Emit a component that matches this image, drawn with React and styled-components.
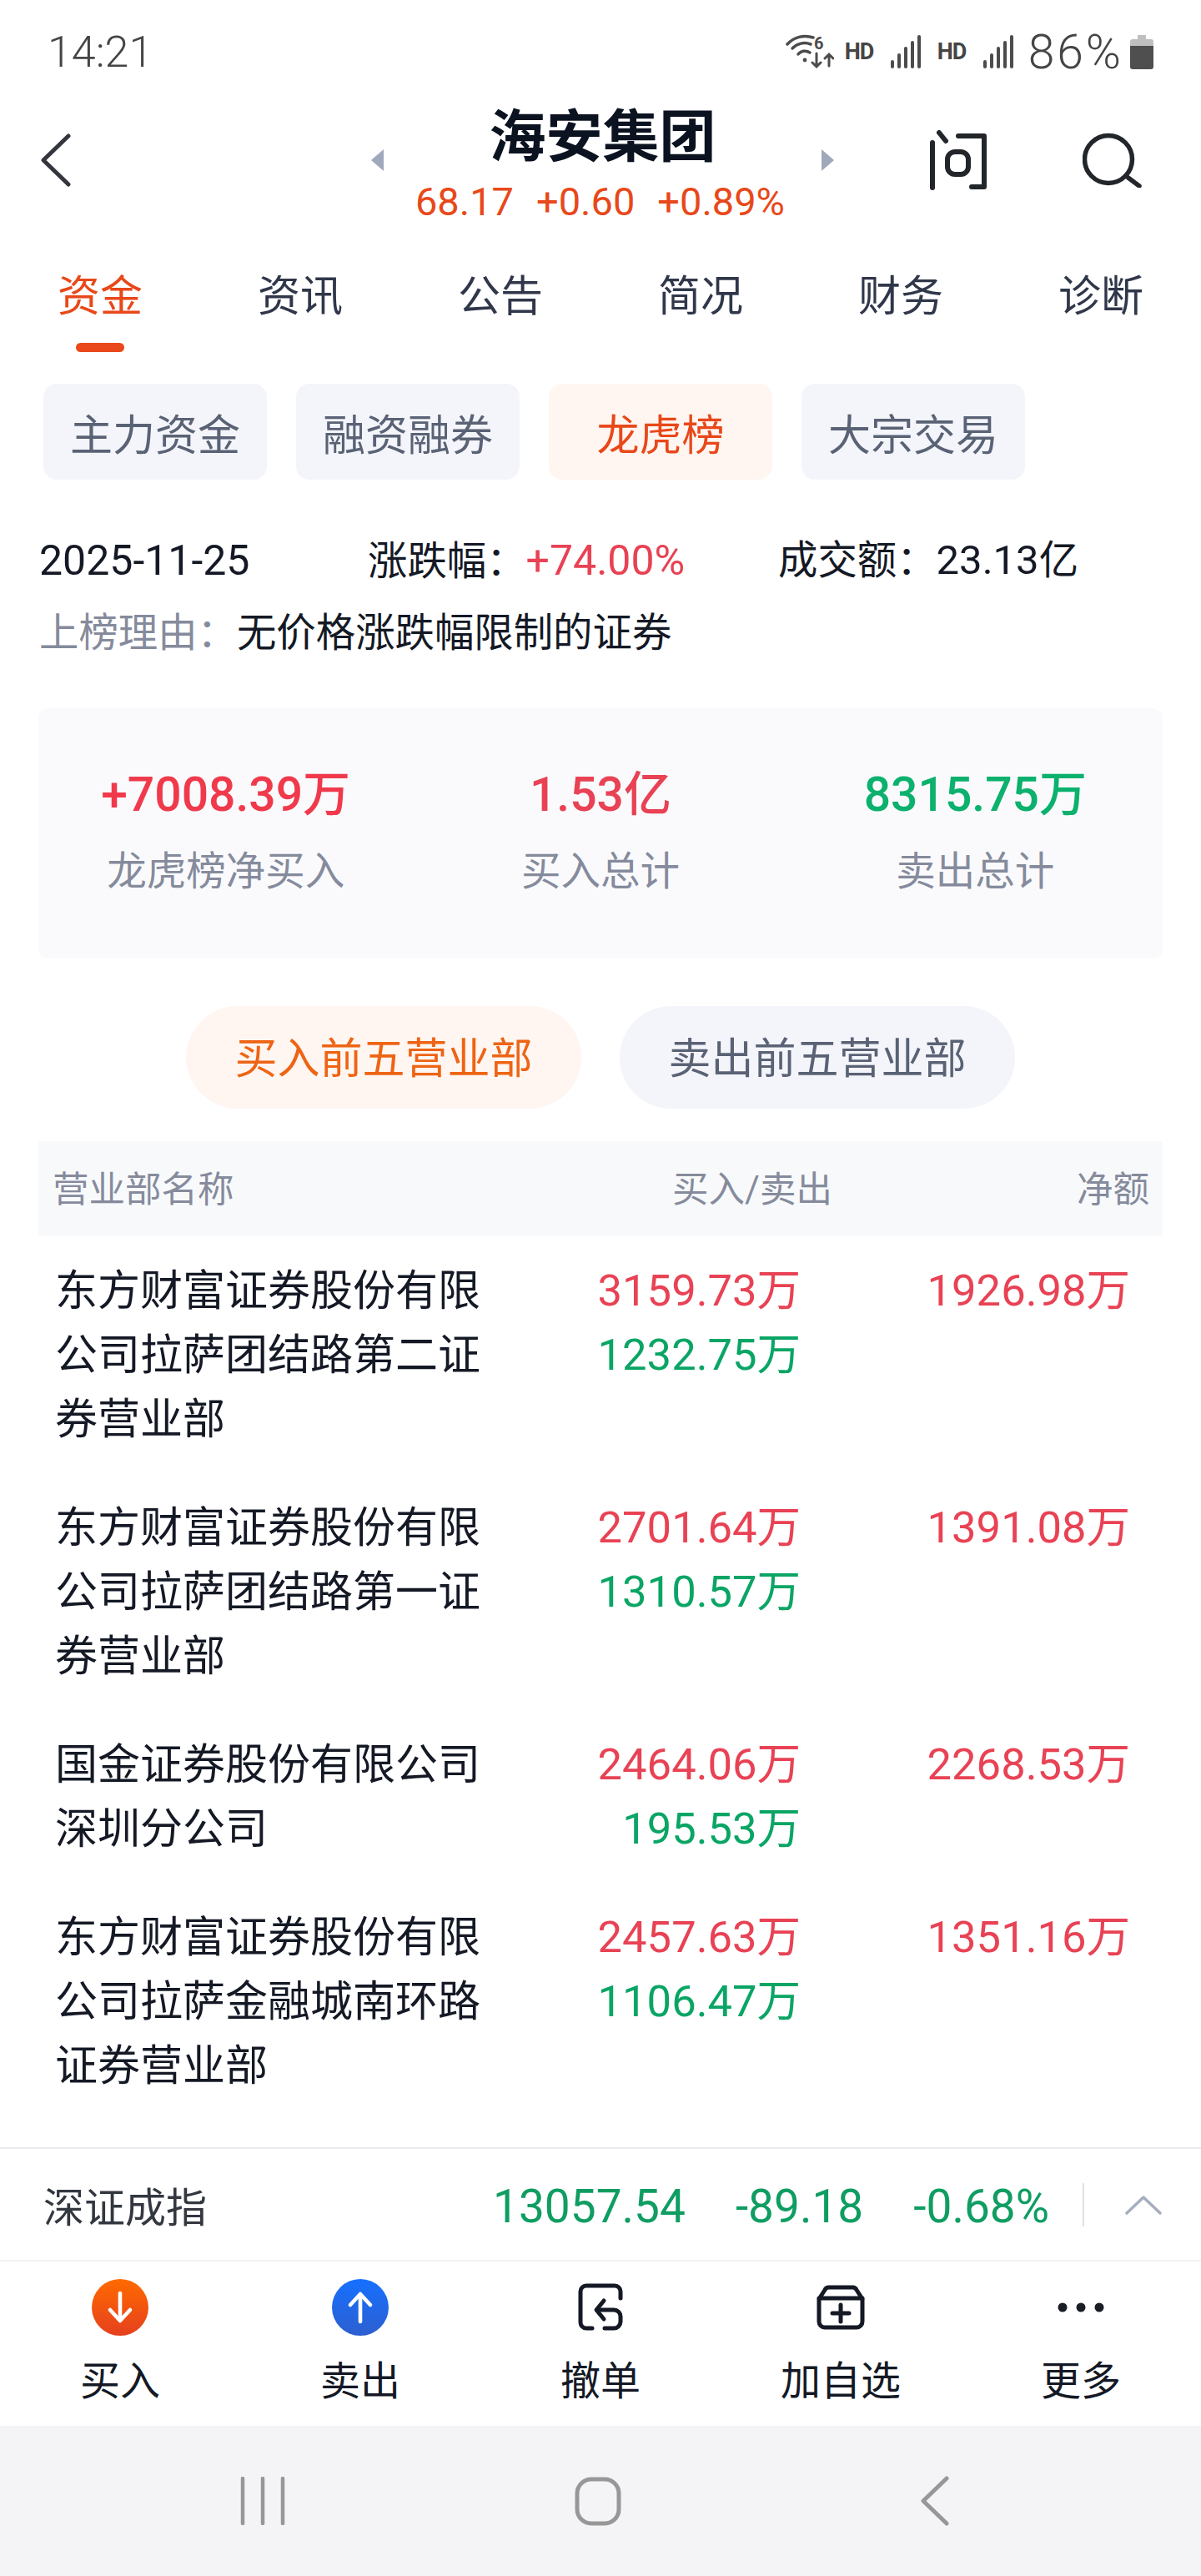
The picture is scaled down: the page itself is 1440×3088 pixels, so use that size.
import React from 'react';
import styled, { createGlobalStyle } from 'styled-components';

const RED = '#e84254';
const ORANGE = '#e8481a';
const GREEN = '#0aa565';
const FONT = 'Roboto, "Noto Sans CJK SC", sans-serif';

const GlobalStyle = createGlobalStyle`
    html, body {
        margin: 0;
        padding: 0;
        background: #fff;
    }
    * {
        box-sizing: border-box;
    }
`;

const Page = styled.div`
    width: 1440px;
    height: 3088px;
    overflow: hidden;
    display: flex;
    flex-direction: column;
    background: #fff;
    color: #141925;
    font-family: ${FONT};
`;

const StatusBar = styled.div`
    height: 124px;
    flex: none;
    display: flex;
    align-items: center;
    padding: 0 57px;
    color: #454545;
    font-size: 52px;
    font-weight: 300;
`;

const StatusRight = styled.div`
    margin-left: auto;
    display: flex;
    align-items: center;
`;

const HdLabel = styled.span`
    font-size: 27px;
    font-weight: 700;
    letter-spacing: -1px;
    width: 35px;
    margin: 0 20px 0 ${p => p.$left}px;
`;

const Battery = styled.span`
    font-size: 57px;
    letter-spacing: 3px;
    margin: 0 8px 0 18px;
`;

const Header = styled.div`
    height: 158px;
    flex: none;
    display: flex;
    align-items: flex-start;
    padding: 0 71px 0 49px;
`;

const IconSlot = styled.div`
    height: 136px;
    display: flex;
    align-items: center;
`;

const TitleArea = styled.div`
    margin-left: 360px;
    width: 555px;
    display: flex;
    justify-content: space-between;
`;

const Title = styled.div`
    display: flex;
    flex-direction: column;
    align-items: center;
    padding-top: 3px;
`;

const StockName = styled.div`
    height: 76px;
    line-height: 76px;
    font-size: 68px;
    font-weight: 700;
    color: #0b1220;
`;

const Quote = styled.div`
    height: 79px;
    line-height: 77px;
    font-size: 47px;
    color: ${ORANGE};
    display: flex;
    gap: 27px;
    transform: translateX(-3px);
`;

const HeaderIcons = styled.div`
    margin-left: auto;
    display: flex;
    gap: 114px;
`;

const Tabs = styled.div`
    flex: none;
    display: grid;
    grid-template-columns: repeat(6, 240px);
`;

const Tab = styled.div`
    height: 140px;
    padding-top: 49px;
    display: flex;
    flex-direction: column;
    align-items: center;
    font-size: 51px;
    line-height: 50px;
    color: ${p => (p.$active ? ORANGE : '#30374a')};
`;

const TabMark = styled.span`
    width: 58px;
    height: 11px;
    margin-top: 30px;
    border-radius: 6px;
    background: ${p => (p.$active ? ORANGE : 'transparent')};
`;

const Chips = styled.div`
    flex: none;
    display: flex;
    gap: 35px;
    margin-top: 38px;
    padding-left: 52px;
`;

const Chip = styled.div`
    width: 268px;
    height: 115px;
    display: flex;
    align-items: center;
    justify-content: center;
    border-radius: 16px;
    font-size: 51px;
    background: ${p => (p.$active ? '#fff6f1' : '#f3f5fa')};
    color: ${p => (p.$active ? ORANGE : '#5a6275')};
`;

const InfoRow = styled.div`
    flex: none;
    display: grid;
    grid-template-columns: 394px 492px 1fr;
    padding-left: 47px;
    font-size: 47.4px;
    line-height: 86px;
    margin-top: ${p => p.$top || 0}px;
`;

const InfoNum = styled.span`
    font-size: ${p => p.$size || 49}px;
    color: ${p => p.$color || 'inherit'};
`;

const Reason = styled.span`
    grid-column: 1 / -1;
`;

const Muted = styled.span`
    color: #858b9c;
`;

const Card = styled.div`
    flex: none;
    margin: 47px 46px 0;
    height: 300px;
    border-radius: 12px;
    background: #fafafd;
    display: grid;
    grid-template-columns: repeat(3, 1fr);
    align-content: center;
    row-gap: 32px;
    text-align: center;
`;

const StatValue = styled.div`
    font-size: 57px;
    line-height: 60px;
    font-weight: 500;
    color: ${p => p.$color};
`;

const StatLabel = styled.div`
    font-size: 47.5px;
    line-height: 60px;
    color: #858b9c;
`;

const Pills = styled.div`
    flex: none;
    margin-top: 57px;
    display: flex;
    justify-content: center;
    gap: 46px;
`;

const Pill = styled.div`
    width: 474px;
    height: 123px;
    padding-bottom: 5px;
    border-radius: 62px;
    display: flex;
    align-items: center;
    justify-content: center;
    font-size: 51px;
    background: ${p => (p.$active ? '#fff6f1' : '#f4f5fa')};
    color: ${p => (p.$active ? '#ee6414' : '#5a6275')};
`;

const TableHead = styled.div`
    flex: none;
    margin: 39px 46px 0;
    height: 114px;
    padding: 0 16px 5px 17px;
    display: grid;
    grid-template-columns: 535px 400px 1fr;
    align-items: center;
    background: #f8f9fb;
    color: #858b9c;
    font-size: 43.5px;
`;

const HeadCell = styled.div`
    text-align: right;
`;

const TableBody = styled.div`
    flex: 1;
    margin: 0 46px;
`;

const Row = styled.div`
    display: grid;
    grid-template-columns: 541px 353px 1fr;
    padding: 27px 39px 26px 20px;
    font-size: 51px;
    line-height: 77px;
`;

const Values = styled.div`
    text-align: right;
    font-size: 52.5px;
`;

const Buy = styled.div`
    color: ${RED};
`;

const Sell = styled.div`
    color: ${GREEN};
`;

const IndexBar = styled.div`
    flex: none;
    height: 137px;
    display: flex;
    align-items: center;
    padding-left: 52px;
    border-top: 2px solid #ececf0;
    border-bottom: 2px solid #f1f2f5;
    font-size: 49px;
    color: #333740;
`;

const IndexValues = styled.div`
    margin-left: auto;
    display: flex;
    gap: 60px;
    padding-top: 5px;
    color: #0f9d62;
    font-size: 55px;
`;

const IndexSplit = styled.span`
    width: 2px;
    height: 52px;
    margin: 0 49px 0 40px;
    background: #dfe2e8;
`;

const ChevronSlot = styled.span`
    display: flex;
    margin-right: 47px;
`;

const Toolbar = styled.div`
    flex: none;
    height: 197px;
    display: grid;
    grid-template-columns: repeat(5, 288px);
`;

const ToolItem = styled.div`
    display: flex;
    flex-direction: column;
    align-items: center;
    padding-top: 21px;
    font-size: 48px;
    color: #141925;
`;

const ToolIcon = styled.div`
    height: 68px;
    display: flex;
    align-items: center;
    justify-content: center;
`;

const ToolLabel = styled.div`
    margin-top: 27px;
    line-height: 56px;
`;

const RoundIcon = styled.div`
    width: 68px;
    height: 68px;
    border-radius: 50%;
    display: flex;
    align-items: center;
    justify-content: center;
    background: ${p => p.$bg};
`;

const NavBar = styled.div`
    flex: none;
    height: 180px;
    background: #f4f4f7;
    display: flex;
    align-items: center;
    padding-left: 288px;
    gap: 347px;
`;

const NavBackSlot = styled.span`
    display: flex;
    margin-left: 12px;
`;

const WifiIcon = () => (
    <svg width="58" height="42" viewBox="0 0 58 42" fill="none" stroke="#4c4c4c" strokeLinecap="round">
        <path d="M2 12 A29 29 0 0 1 33 4" strokeWidth="3.5" />
        <path d="M8 17 A20 20 0 0 1 30 12" strokeWidth="3.5" />
        <path d="M15 24 A10.5 10.5 0 0 1 29 22" strokeWidth="3.5" />
        <circle cx="23" cy="31" r="2.4" fill="#4c4c4c" stroke="none" />
        <text x="34" y="18" fontFamily="Roboto, sans-serif" fontSize="20" fontWeight="700" fill="#4c4c4c" stroke="none">6</text>
        <path d="M37 23 V39 M32 34 L37 39 L42 34 M52 38 V24 M47 29 L52 24 L57 29" strokeWidth="3" />
    </svg>
);

const SignalIcon = () => (
    <svg width="36" height="40" viewBox="0 0 36 40" fill="#4c4c4c">
        <rect x="0" y="30" width="4" height="10" rx="2" />
        <rect x="8" y="22" width="4" height="18" rx="2" />
        <rect x="16" y="14" width="4" height="26" rx="2" />
        <rect x="24" y="7" width="4" height="33" rx="2" />
        <rect x="32" y="0" width="4" height="40" rx="2" />
    </svg>
);

const BatteryIcon = () => (
    <svg width="28" height="41" viewBox="0 0 28 41">
        <path d="M9 0 H19 V5 H25 a3 3 0 0 1 3 3 V13 H0 V8 a3 3 0 0 1 3-3 H9 Z" fill="#bfbfbf" />
        <path d="M0 13 H28 V38 a3 3 0 0 1 -3 3 H3 a3 3 0 0 1 -3-3 Z" fill="#4f4f4f" />
    </svg>
);

const BackIcon = () => (
    <svg width="36" height="64" viewBox="0 0 36 64" fill="none" stroke="#33363d" strokeWidth="5" strokeLinecap="round" strokeLinejoin="round">
        <path d="M33 3 L3 32 L33 61" />
    </svg>
);

const Triangle = ({ flip }) => (
    <svg width="15" height="26" viewBox="0 0 15 26" fill="#a0a8bc">
        <path d={flip ? 'M0 0 L15 13 L0 26 Z' : 'M15 0 L0 13 L15 26 Z'} />
    </svg>
);

const AskIcon = () => (
    <svg width="70" height="72" viewBox="0 0 70 72" fill="none" stroke="#22262b" strokeWidth="6" strokeLinecap="round" strokeLinejoin="round">
        <path d="M4 15 V69" />
        <path d="M12 3 L20 13" />
        <path d="M35 7 H66 V68 H51" />
        <rect x="22" y="26" width="25" height="27" rx="9" />
    </svg>
);

const SearchIcon = () => (
    <svg width="71" height="66" viewBox="0 0 71 66" fill="none" stroke="#22262b" strokeWidth="5.5" strokeLinecap="round">
        <circle cx="31" cy="32" r="28.5" />
        <path d="M52 52 L68 64" />
    </svg>
);

const ArrowIcon = ({ up }) => (
    <svg width="34" height="40" viewBox="0 0 34 40" fill="none" stroke="#fff" strokeWidth="4.6" strokeLinecap="round" strokeLinejoin="round">
        <path d={up ? 'M17 37 V4 M5 17 L17 4 L29 17' : 'M17 3 V36 M5 23 L17 36 L29 23'} />
    </svg>
);

const CancelIcon = () => (
    <svg width="55" height="58" viewBox="0 0 55 58" fill="none" stroke="#141925" strokeWidth="5" strokeLinecap="round" strokeLinejoin="round">
        <path d="M17 54 H10 a7 7 0 0 1 -7 -7 V10 a7 7 0 0 1 7 -7 H44 a7 7 0 0 1 7 7 V18" />
        <path d="M31 21 L22 32 L31 43" />
        <path d="M23 32 H43 a8 8 0 0 1 8 8 V46 a8 8 0 0 1 -8 8 H32" />
    </svg>
);

const WatchIcon = () => (
    <svg width="58" height="54" viewBox="0 0 58 54" fill="none" stroke="#141925" strokeWidth="5" strokeLinecap="round" strokeLinejoin="round">
        <path d="M15 3 H43 a5 5 0 0 1 5 3 L55 17 V44 a7 7 0 0 1 -7 7 H10 a7 7 0 0 1 -7 -7 V17 L10 6 a5 5 0 0 1 5 -3 Z" />
        <path d="M3 16 H55" />
        <path d="M19 34 H39 M29 24 V44" />
    </svg>
);

const MoreIcon = () => (
    <svg width="56" height="12" viewBox="0 0 56 12" fill="#1a1d26">
        <circle cx="6" cy="6" r="5.5" />
        <circle cx="28" cy="6" r="5.5" />
        <circle cx="50" cy="6" r="5.5" />
    </svg>
);

const RecentIcon = () => (
    <svg width="54" height="58" viewBox="0 0 54 58" fill="none" stroke="#979797" strokeWidth="4.5" strokeLinecap="round">
        <path d="M3 2 V56 M27 2 V56 M51 2 V56" />
    </svg>
);

const HomeIcon = () => (
    <svg width="56" height="59" viewBox="0 0 56 59" fill="none" stroke="#979797" strokeWidth="5">
        <rect x="3" y="3" width="50" height="53" rx="17" />
    </svg>
);

const NavBackIcon = () => (
    <svg width="34" height="60" viewBox="0 0 34 60" fill="none" stroke="#979797" strokeWidth="5" strokeLinecap="round" strokeLinejoin="round">
        <path d="M31 3 L3 30 L31 57" />
    </svg>
);

const ChevronUp = () => (
    <svg width="44" height="24" viewBox="0 0 44 24" fill="none" stroke="#a6adbf" strokeWidth="3.5" strokeLinecap="round" strokeLinejoin="round">
        <path d="M2 22 L22 3 L42 22" />
    </svg>
);

const TAB_ITEMS = ['资金', '资讯', '公告', '简况', '财务', '诊断'];

const CHIP_ITEMS = ['主力资金', '融资融券', '龙虎榜', '大宗交易'];

const ROWS = [
    { name: '东方财富证券股份有限公司拉萨团结路第二证券营业部', buy: '3159.73万', sell: '1232.75万', net: '1926.98万' },
    { name: '东方财富证券股份有限公司拉萨团结路第一证券营业部', buy: '2701.64万', sell: '1310.57万', net: '1391.08万' },
    { name: '国金证券股份有限公司深圳分公司', buy: '2464.06万', sell: '195.53万', net: '2268.53万' },
    { name: '东方财富证券股份有限公司拉萨金融城南环路证券营业部', buy: '2457.63万', sell: '1106.47万', net: '1351.16万' },
];

export default function App() {
    return <Page>
        <GlobalStyle />
        <StatusBar>
            <span>14:21</span>
            <StatusRight>
                <WifiIcon />
                <HdLabel $left={13}>HD</HdLabel>
                <SignalIcon />
                <HdLabel $left={20}>HD</HdLabel>
                <SignalIcon />
                <Battery>86%</Battery>
                <BatteryIcon />
            </StatusRight>
        </StatusBar>
        <Header>
            <IconSlot><BackIcon /></IconSlot>
            <TitleArea>
                <IconSlot><Triangle /></IconSlot>
                <Title>
                    <StockName>海安集团</StockName>
                    <Quote>
                        <span>68.17</span>
                        <span>+0.60</span>
                        <span>+0.89%</span>
                    </Quote>
                </Title>
                <IconSlot><Triangle flip /></IconSlot>
            </TitleArea>
            <HeaderIcons>
                <IconSlot><AskIcon /></IconSlot>
                <IconSlot><SearchIcon /></IconSlot>
            </HeaderIcons>
        </Header>
        <Tabs>
            {TAB_ITEMS.map((t, i) => (
                <Tab key={t} $active={i === 0}>
                    {t}
                    <TabMark $active={i === 0} />
                </Tab>
            ))}
        </Tabs>
        <Chips>
            {CHIP_ITEMS.map((t, i) => <Chip key={t} $active={i === 2}>{t}</Chip>)}
        </Chips>
        <InfoRow $top={54}>
            <InfoNum $size={50}>2025-11-25</InfoNum>
            <span>涨跌幅：<InfoNum $size={50} $color={RED}>+74.00%</InfoNum></span>
            <span>成交额：<InfoNum>23.13</InfoNum>亿</span>
        </InfoRow>
        <InfoRow>
            <Reason><Muted>上榜理由：</Muted>无价格涨跌幅限制的证券</Reason>
        </InfoRow>
        <Card>
            <StatValue $color="#f03a4c">+7008.39万</StatValue>
            <StatValue $color="#e84254">1.53亿</StatValue>
            <StatValue $color="#0bb16d">8315.75万</StatValue>
            <StatLabel>龙虎榜净买入</StatLabel>
            <StatLabel>买入总计</StatLabel>
            <StatLabel>卖出总计</StatLabel>
        </Card>
        <Pills>
            <Pill $active>买入前五营业部</Pill>
            <Pill>卖出前五营业部</Pill>
        </Pills>
        <TableHead>
            <div>营业部名称</div>
            <HeadCell>买入/卖出</HeadCell>
            <HeadCell>净额</HeadCell>
        </TableHead>
        <TableBody>
            {ROWS.map(r => (
                <Row key={r.buy}>
                    <div>{r.name}</div>
                    <Values>
                        <Buy>{r.buy}</Buy>
                        <Sell>{r.sell}</Sell>
                    </Values>
                    <Values>
                        <Buy>{r.net}</Buy>
                    </Values>
                </Row>
            ))}
        </TableBody>
        <IndexBar>
            深证成指
            <IndexValues>
                <span>13057.54</span>
                <span>-89.18</span>
                <span>-0.68%</span>
            </IndexValues>
            <IndexSplit />
            <ChevronSlot><ChevronUp /></ChevronSlot>
        </IndexBar>
        <Toolbar>
            <ToolItem>
                <ToolIcon><RoundIcon $bg="linear-gradient(#ff6a00, #e5401f)"><ArrowIcon /></RoundIcon></ToolIcon>
                <ToolLabel>买入</ToolLabel>
            </ToolItem>
            <ToolItem>
                <ToolIcon><RoundIcon $bg="linear-gradient(#1570ff, #2d5fd0)"><ArrowIcon up /></RoundIcon></ToolIcon>
                <ToolLabel>卖出</ToolLabel>
            </ToolItem>
            <ToolItem>
                <ToolIcon><CancelIcon /></ToolIcon>
                <ToolLabel>撤单</ToolLabel>
            </ToolItem>
            <ToolItem>
                <ToolIcon><WatchIcon /></ToolIcon>
                <ToolLabel>加自选</ToolLabel>
            </ToolItem>
            <ToolItem>
                <ToolIcon><MoreIcon /></ToolIcon>
                <ToolLabel>更多</ToolLabel>
            </ToolItem>
        </Toolbar>
        <NavBar>
            <RecentIcon />
            <HomeIcon />
            <NavBackSlot><NavBackIcon /></NavBackSlot>
        </NavBar>
    </Page>;
}
